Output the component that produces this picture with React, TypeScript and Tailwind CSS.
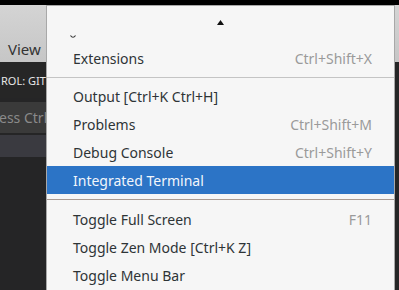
import React from "react";

type Item = { label: string; shortcut?: string; active?: boolean } | "sep";

const ITEMS: Item[] = [
  { label: "Extensions", shortcut: "Ctrl+Shift+X" },
  "sep",
  { label: "Output [Ctrl+K Ctrl+H]" },
  { label: "Problems", shortcut: "Ctrl+Shift+M" },
  { label: "Debug Console", shortcut: "Ctrl+Shift+Y" },
  { label: "Integrated Terminal", active: true },
  "sep",
  { label: "Toggle Full Screen", shortcut: "F11" },
  { label: "Toggle Zen Mode [Ctrl+K Z]" },
  { label: "Toggle Menu Bar" },
];

export default function App() {
  return (
    <div
      className="relative w-[399px] h-[290px] overflow-hidden bg-[#252526]"
      style={{ fontFamily: '"Noto Sans", "Open Sans", sans-serif' }}
    >
      {/* window behind the menu */}
      <div className="h-[5px] bg-black" />
      <div className="h-[57px] bg-gradient-to-b from-[#d4d4d4] to-[#c6c6c6] flex items-end pb-[3px] pl-[8px]">
        <span className="text-[15px] text-[#333] leading-[20px]">View</span>
      </div>
      <div className="h-[36px] bg-[#262626] flex items-center pl-[1px] w-[46px] whitespace-nowrap">
        <span className="text-[11px] text-[#e6e6e6] mt-[2px]">ROL: GIT</span>
      </div>
      <div className="h-[4px]" />
      <div className="h-[31px] w-[46px] bg-[#3a3a3a] flex items-center overflow-hidden whitespace-nowrap">
        <span className="text-[14px] text-[#8a8a8a] -ml-[1px]">ess Ctrl</span>
      </div>
      <div className="h-[2px]" />
      <div className="h-[22px] w-[46px] bg-[#3a3a40]" />

      {/* dropdown menu */}
      <div className="absolute left-[46px] top-[5px] w-[349px] h-[290px] bg-[#f6f6f6] border-l border-r border-t border-[#a8a8a8]">
        <div className="relative h-[38px]">
          <svg className="absolute left-[170px] top-[14px]" width="7" height="5" viewBox="0 0 7 5">
            <path d="M3.5 0 L7 5 L0 5 Z" fill="#111" />
          </svg>
          <svg className="absolute left-[23px] top-[29px]" width="6" height="4" viewBox="0 0 6 4">
            <path d="M0.5 0.5 Q3 4 5.5 0.5" stroke="#333" strokeWidth="1.2" fill="none" />
          </svg>
        </div>
        {ITEMS.map((item, i) =>
          item === "sep" ? (
            <div key={i} className={`flex items-center ${i > 3 ? "h-[11px]" : "h-[10px]"}`}>
              <div className={`h-px w-full ${i > 3 ? "bg-[#a89a92]" : "bg-[#c4c4c4]"}`} />
            </div>
          ) : (
            <div
              key={i}
              className={`h-[28px] flex items-center justify-between pl-[26px] pr-[22px] text-[14px] whitespace-nowrap ${
                item.active ? "bg-[#2c74c6] text-[#f2f6fb]" : "text-[#2e3436]"
              }`}
            >
              <span>{item.label}</span>
              {item.shortcut && <span className="text-[#9a9a9a]">{item.shortcut}</span>}
            </div>
          )
        )}
      </div>
    </div>
  );
}
